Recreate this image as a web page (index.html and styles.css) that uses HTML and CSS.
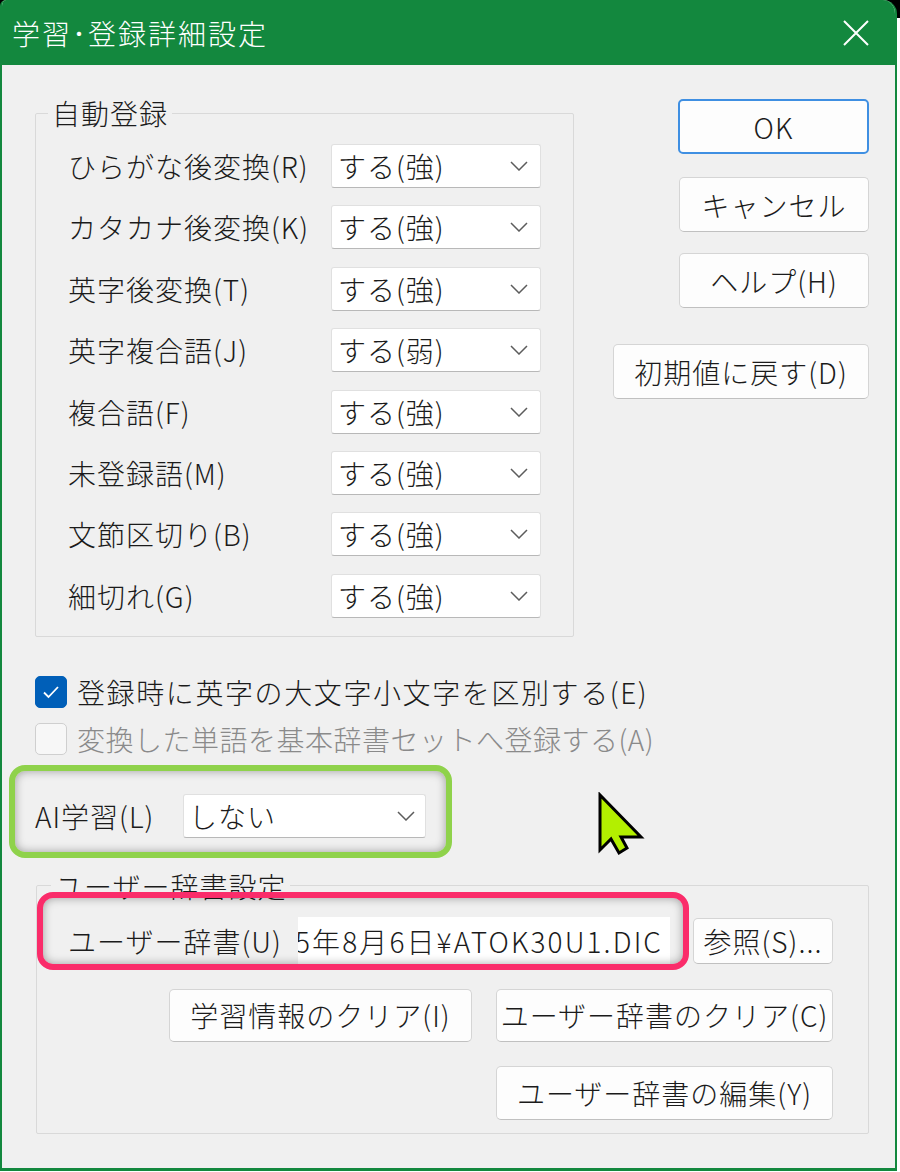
FILE: index.html
```html
<!DOCTYPE html>
<html lang="ja">
<head>
<meta charset="utf-8">
<title>学習・登録詳細設定</title>
<link rel="stylesheet" href="styles.css">
</head>
<body>
<div class="window">
  <div class="titlebar">
    <span class="title">学習･登録詳細設定</span>
    <svg class="close" width="26" height="26" viewBox="0 0 26 26"><path d="M1 1 L25 25 M25 1 L1 25" stroke="#fff" stroke-width="2" fill="none"/></svg>
  </div>
  <div class="client">
    <div class="top">
      <fieldset class="group auto">
        <legend>自動登録</legend>
        <div class="rows">
          <div class="row"><span class="lbl">ひらがな後変換(R)</span><div class="select"><span>する(強)</span><svg class="chev" width="18" height="10" viewBox="0 0 18 10"><polyline points="1,1 9,9 17,1" fill="none" stroke="#5c5c5c" stroke-width="1.5"/></svg></div></div>
          <div class="row"><span class="lbl">カタカナ後変換(K)</span><div class="select"><span>する(強)</span><svg class="chev" width="18" height="10" viewBox="0 0 18 10"><polyline points="1,1 9,9 17,1" fill="none" stroke="#5c5c5c" stroke-width="1.5"/></svg></div></div>
          <div class="row"><span class="lbl">英字後変換(T)</span><div class="select"><span>する(強)</span><svg class="chev" width="18" height="10" viewBox="0 0 18 10"><polyline points="1,1 9,9 17,1" fill="none" stroke="#5c5c5c" stroke-width="1.5"/></svg></div></div>
          <div class="row"><span class="lbl">英字複合語(J)</span><div class="select"><span>する(弱)</span><svg class="chev" width="18" height="10" viewBox="0 0 18 10"><polyline points="1,1 9,9 17,1" fill="none" stroke="#5c5c5c" stroke-width="1.5"/></svg></div></div>
          <div class="row"><span class="lbl">複合語(F)</span><div class="select"><span>する(強)</span><svg class="chev" width="18" height="10" viewBox="0 0 18 10"><polyline points="1,1 9,9 17,1" fill="none" stroke="#5c5c5c" stroke-width="1.5"/></svg></div></div>
          <div class="row"><span class="lbl">未登録語(M)</span><div class="select"><span>する(強)</span><svg class="chev" width="18" height="10" viewBox="0 0 18 10"><polyline points="1,1 9,9 17,1" fill="none" stroke="#5c5c5c" stroke-width="1.5"/></svg></div></div>
          <div class="row"><span class="lbl">文節区切り(B)</span><div class="select"><span>する(強)</span><svg class="chev" width="18" height="10" viewBox="0 0 18 10"><polyline points="1,1 9,9 17,1" fill="none" stroke="#5c5c5c" stroke-width="1.5"/></svg></div></div>
          <div class="row"><span class="lbl">細切れ(G)</span><div class="select"><span>する(強)</span><svg class="chev" width="18" height="10" viewBox="0 0 18 10"><polyline points="1,1 9,9 17,1" fill="none" stroke="#5c5c5c" stroke-width="1.5"/></svg></div></div>
        </div>
      </fieldset>
      <div class="side">
        <div class="btn ok">OK</div>
        <div class="btn cancel">キャンセル</div>
        <div class="btn help">ヘルプ(H)</div>
        <div class="btn reset">初期値に戻す(D)</div>
      </div>
    </div>

    <div class="check first">
      <span class="box checked"><svg width="32" height="32" viewBox="0 0 32 32"><polyline points="9,16.5 13.5,21 23,11" fill="none" stroke="#fff" stroke-width="1.8"/></svg></span>
      <span class="ctext">登録時に英字の大文字小文字を区別する(E)</span>
    </div>
    <div class="check second disabled">
      <span class="box"></span>
      <span class="ctext">変換した単語を基本辞書セットへ登録する(A)</span>
    </div>

    <div class="ai-row">
      <span class="ai-lbl">AI学習(L)</span>
      <div class="select ai-select"><span>しない</span><svg class="chev" width="18" height="10" viewBox="0 0 18 10"><polyline points="1,1 9,9 17,1" fill="none" stroke="#5c5c5c" stroke-width="1.5"/></svg></div>
    </div>

    <fieldset class="group user">
      <legend>ユーザー辞書設定</legend>
      <div class="user-body">
        <div class="urow first">
          <span class="ulbl">ユーザー辞書(U)</span>
          <div class="field"><span>2025年8月6日¥ATOK30U1.DIC</span></div>
          <div class="btn browse">参照(S)...</div>
        </div>
        <div class="urow second">
          <div class="btn clear-learn">学習情報のクリア(I)</div>
          <div class="btn clear-dict">ユーザー辞書のクリア(C)</div>
        </div>
        <div class="urow third">
          <div class="btn edit-dict">ユーザー辞書の編集(Y)</div>
        </div>
      </div>
    </fieldset>
  </div>

  <div class="mark green"></div>
  <div class="mark pink"></div>
  <svg class="cursor" width="48" height="64" viewBox="0 0 48 64"><polygon points="3,3 3,58 14,47 22,61 30,56 24,45 44,45" fill="#b3ef00" stroke="#000" stroke-width="3" stroke-linejoin="miter"/></svg>
</div>
</body>
</html>
```

FILE: styles.css
```css
html, body {
  margin: 0;
  padding: 0;
}
body {
  background: linear-gradient(#000 0, #000 18px, #fff 18px);
  width: 900px;
  height: 1172px;
  overflow: hidden;
  font-family: "Noto Sans CJK JP", "Noto Sans", sans-serif;
  font-size: 28px;
  font-weight: 300;
  letter-spacing: 1px;
  color: #1b1b1b;
}
.window {
  position: relative;
  width: 897px;
  height: 1171px;
  box-sizing: border-box;
  border: 2px solid #13883e;
  border-top: 0;
  border-bottom-width: 3px;
  border-radius: 6px 14px 0 0;
  background: #f0f0f0;
  overflow: hidden;
}
.titlebar {
  height: 65px;
  background: #13883e;
  display: flex;
  align-items: center;
  justify-content: space-between;
  padding: 0 26px 0 10px;
  color: #fff;
}
.title {
  font-size: 28px;
  letter-spacing: 2px;
  line-height: 32px;
  margin-top: 1px;
}
.close {
  display: block;
}
.client {
  padding: 32px 26px 0 33px;
}
.top {
  display: flex;
  justify-content: space-between;
  align-items: flex-start;
}
.group {
  margin: 0;
  padding: 0;
  border: 1px solid #d9d9d9;
  border-radius: 2px;
  box-sizing: border-box;
  min-width: 0;
}
.group legend {
  padding: 0 4px;
  line-height: 32px;
  height: 32px;
}
.auto {
  width: 539px;
}
.auto legend {
  margin-left: 12px;
}
.rows {
  display: flex;
  flex-direction: column;
  gap: 17.4px;
  padding: 15px 32px 18px 32px;
}
.row {
  display: flex;
  align-items: center;
  height: 44px;
}
.lbl {
  width: 263px;
  white-space: nowrap;
}
.select {
  box-sizing: border-box;
  width: 210px;
  height: 44px;
  background: #fff;
  border: 1px solid #e0e0e0;
  border-bottom-color: #b8b8b8;
  border-radius: 3px;
  display: flex;
  align-items: center;
  justify-content: space-between;
  padding: 0 12px 0 6px;
  line-height: 32px;
}
.chev {
  display: block;
  flex: none;
}
.side {
  width: 256px;
  display: flex;
  flex-direction: column;
  align-items: flex-end;
  margin-top: 2px;
}
.btn {
  box-sizing: border-box;
  height: 55px;
  background: #fdfdfd;
  border: 1px solid #d5d5d5;
  border-bottom-color: #c0c0c0;
  border-radius: 5px;
  display: flex;
  align-items: center;
  justify-content: center;
  white-space: nowrap;
  line-height: 32px;
}
.ok {
  width: 191px;
  border: 2px solid #3f8fe2;
}
.cancel {
  width: 190px;
  margin-top: 23px;
}
.help {
  width: 190px;
  margin-top: 21px;
}
.reset {
  width: 256px;
  margin-top: 36px;
}
.check {
  display: flex;
  align-items: center;
  gap: 10px;
  height: 32px;
  line-height: 32px;
}
.check.first {
  margin-top: 39px;
}
.check.second {
  margin-top: 15px;
}
.first .ctext {
  letter-spacing: 1.6px;
}
.second .ctext {
  letter-spacing: 0.5px;
}
.box {
  box-sizing: border-box;
  width: 32px;
  height: 32px;
  border-radius: 5px;
  border: 1px solid #cfcfcf;
  background: #f7f7f7;
  flex: none;
}
.box.checked {
  background: #005fb8;
  border-color: #005fb8;
}
.box.checked svg {
  display: block;
  margin: -1px;
}
.disabled .ctext {
  color: #8a8a8a;
}
.ai-row {
  display: flex;
  align-items: center;
  margin-top: 39px;
  height: 44px;
}
.ai-lbl {
  width: 148px;
  white-space: nowrap;
}
.ai-select {
  width: 243px;
  padding: 0 10px 0 5px;
}
.user {
  width: 833px;
  margin: 32px 0 0 1px;
}
.user legend {
  margin-left: 14px;
}
.user-body {
  padding: 15px 35px 13px 31px;
  display: flex;
  flex-direction: column;
}
.urow {
  display: flex;
  align-items: center;
  justify-content: flex-end;
}
.urow.first {
  height: 49px;
  justify-content: flex-start;
}
.ulbl {
  width: 230px;
  white-space: nowrap;
}
.field {
  width: 372px;
  height: 49px;
  background: #fff;
  overflow: hidden;
  display: flex;
  justify-content: flex-end;
  align-items: center;
  padding-right: 7px;
  box-sizing: border-box;
  white-space: nowrap;
  line-height: 32px;
  letter-spacing: 2.1px;
}
.field span {
  flex: none;
}
.browse {
  width: 140px;
  height: 46px;
  margin-left: 23px;
}
.urow.second {
  margin-top: 23px;
  gap: 24px;
}
.clear-learn {
  width: 303px;
  height: 53px;
}
.clear-dict {
  width: 337px;
  height: 53px;
}
.urow.third {
  margin-top: 24px;
}
.edit-dict {
  width: 337px;
  height: 54px;
}
.mark {
  position: absolute;
  box-sizing: border-box;
  border-radius: 16px;
  box-shadow: inset 0 0 10px rgba(0, 0, 0, 0.35);
}
.mark.green {
  left: 7px;
  top: 765px;
  width: 443px;
  height: 93px;
  border: 6px solid #8fd24b;
}
.mark.pink {
  left: 35px;
  top: 892px;
  width: 652px;
  height: 78px;
  border: 6px solid #fa2c6a;
}
.cursor {
  position: absolute;
  left: 595px;
  top: 792px;
}
```
